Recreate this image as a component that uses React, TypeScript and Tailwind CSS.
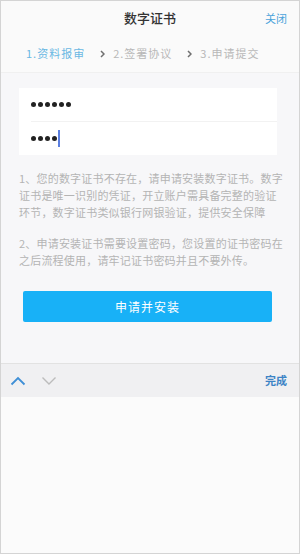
import React from "react";

const font = { fontFamily: '"Noto Sans CJK SC", "Noto Sans", sans-serif' };

function Dots({ n }: { n: number }) {
  return (
    <div className="flex items-center gap-[2px]">
      {Array.from({ length: n }).map((_, i) => (
        <span key={i} className="block w-[5px] h-[5px] rounded-full bg-[#222]" />
      ))}
    </div>
  );
}

function Chevron() {
  return (
    <svg width="5" height="8" viewBox="0 0 5 8" className="ml-[15px] mr-[8px]">
      <path d="M1 1 L4 4 L1 7" fill="none" stroke="#6f6f6f" strokeWidth="1.5" />
    </svg>
  );
}

export default function App() {
  return (
    <div
      className="w-[300px] h-[554px] bg-[#f9f9f9] border border-[#d4d4d4] flex flex-col overflow-hidden"
      style={font}
    >
      {/* header */}
      <div className="h-[34px] flex items-center justify-center relative bg-[#fafafa]">
        <span className="text-[13px] text-[#333] font-medium">数字证书</span>
        <span className="absolute right-[12px] top-[9px] text-[11px] text-[#4aa3db]">关闭</span>
      </div>
      {/* steps */}
      <div className="h-[38px] flex items-center pl-[25px] text-[11px] tracking-[1px] bg-[#fafafa] border-b border-[#f0f0f0]">
        <span className="text-[#6ab8e3]">1.资料报审</span>
        <Chevron />
        <span className="text-[#b8b8b8]">2.签署协议</span>
        <Chevron />
        <span className="text-[#b8b8b8]">3.申请提交</span>
      </div>
      {/* body */}
      <div className="bg-[#f7f7f9] flex flex-col pl-[18px] pr-[18px] pt-[15px]">
        <div className="bg-white mr-[4px]">
          <div className="h-[33px] flex items-center pl-[12px]">
            <Dots n={6} />
          </div>
          <div className="h-px bg-[#f2f2f2] ml-[12px]" />
          <div className="h-[33px] flex items-center pl-[12px]">
            <Dots n={4} />
            <span className="block w-[2px] h-[17px] bg-[#5b7fe0] ml-[1px]" />
          </div>
        </div>
        <div className="mt-[15px] w-[265px] text-[11px] leading-[17px] text-[#b4b4b4] tracking-[0.2px]">
          <p>1、您的数字证书不存在，请申请安装数字证书。数字证书是唯一识别的凭证，开立账户需具备完整的验证环节，数字证书类似银行网银验证，提供安全保障</p>
          <p className="mt-[14px]">2、申请安装证书需要设置密码，您设置的证书密码在之后流程使用，请牢记证书密码并且不要外传。</p>
        </div>
        <div className="mt-[22px] ml-[4px] mr-[9px] h-[31px] rounded-[2px] bg-[#18b1f7] flex items-center justify-center">
          <span className="text-white text-[12px] tracking-[1px]">申请并安装</span>
        </div>
        <div className="h-[41px]" />
      </div>
      {/* keyboard toolbar */}
      <div className="h-[34px] bg-[#f0f0f2] border-t border-[#e2e2e2] flex items-center px-[9px]">
        <svg width="16" height="10" viewBox="0 0 16 10">
          <path d="M1.5 8.5 L8 2 L14.5 8.5" fill="none" stroke="#3f8fd6" strokeWidth="1.8" />
        </svg>
        <svg width="16" height="10" viewBox="0 0 16 10" className="ml-[15px]">
          <path d="M1.5 1.5 L8 8 L14.5 1.5" fill="none" stroke="#bcbcbc" strokeWidth="1.4" />
        </svg>
        <span className="ml-auto mr-[3px] text-[11px] font-bold text-[#3d84c6]">完成</span>
      </div>
      <div className="flex-1 bg-[#fbfbfb]" />
    </div>
  );
}
